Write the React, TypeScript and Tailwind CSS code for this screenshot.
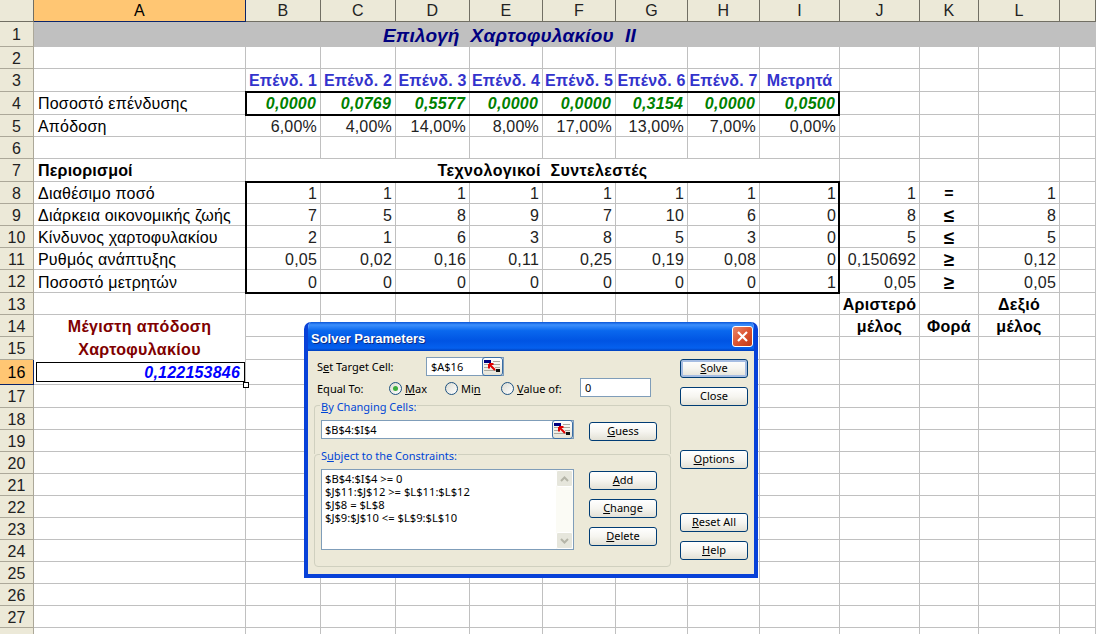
import type { ReactNode } from "react";

const COLS = ["A", "B", "C", "D", "E", "F", "G", "H", "I", "J", "K", "L", "M"];
const ROW_COUNT = 28;

const LABEL = "justify-start pl-[4px] pt-[3px] text-black";
const NUM = "justify-end pr-[3px] pt-[3px] text-[#222]";
const HEAD = "justify-center pt-[2px] font-bold text-[#3333cc]";
const WEIGHT = "justify-end pr-[4px] pt-[2px] font-bold italic text-[#008000]";
const BOLD = "justify-center pt-[2px] font-bold tracking-[0.3px] text-black";
const SIGN = "justify-center pt-[2px] font-bold text-[19px] text-black";
const MAROON = "justify-center pt-[2px] font-bold tracking-[0.35px] text-[#800000]";

type Cell = { text: string; cls: string; skipBottom?: boolean };

const cells: Record<string, Cell> = {
  A4: { text: "Ποσοστό επένδυσης", cls: "justify-start pl-[4px] pt-[2px] text-black" },
  A5: { text: "Απόδοση", cls: LABEL },
  A7: { text: "Περιορισμοί", cls: "justify-start pl-[4px] pt-[2px] font-bold text-black" },
  A8: { text: "Διαθέσιμο ποσό", cls: LABEL },
  A9: { text: "Διάρκεια οικονομικής ζωής", cls: LABEL },
  A10: { text: "Κίνδυνος χαρτοφυλακίου", cls: LABEL },
  A11: { text: "Ρυθμός ανάπτυξης", cls: LABEL },
  A12: { text: "Ποσοστό μετρητών", cls: LABEL },
  A14: { text: "Μέγιστη απόδοση", cls: MAROON, skipBottom: true },
  A15: { text: "Χαρτοφυλακίου", cls: MAROON, skipBottom: true },
  J13: { text: "Αριστερό", cls: BOLD },
  J14: { text: "μέλος", cls: BOLD },
  K14: { text: "Φορά", cls: BOLD },
  L13: { text: "Δεξιό", cls: BOLD },
  L14: { text: "μέλος", cls: BOLD },
  K8: { text: "=", cls: BOLD },
  K9: { text: "≤", cls: SIGN },
  K10: { text: "≤", cls: SIGN },
  K11: { text: "≥", cls: SIGN },
  K12: { text: "≥", cls: SIGN },
};

function fill(row: number, values: string[], cls: string, start = 1) {
  values.forEach((text, i) => {
    cells[`${COLS[start + i]}${row}`] = { text, cls };
  });
}

fill(3, ["Επένδ. 1", "Επένδ. 2", "Επένδ. 3", "Επένδ. 4", "Επένδ. 5", "Επένδ. 6", "Επένδ. 7", "Μετρητά"], HEAD);
fill(4, ["0,0000", "0,0769", "0,5577", "0,0000", "0,0000", "0,3154", "0,0000", "0,0500"], WEIGHT);
fill(5, ["6,00%", "4,00%", "14,00%", "8,00%", "17,00%", "13,00%", "7,00%", "0,00%"], NUM);
fill(8, ["1", "1", "1", "1", "1", "1", "1", "1", "1"], NUM);
fill(9, ["7", "5", "8", "9", "7", "10", "6", "0", "8"], NUM);
fill(10, ["2", "1", "6", "3", "8", "5", "3", "0", "5"], NUM);
fill(11, ["0,05", "0,02", "0,16", "0,11", "0,25", "0,19", "0,08", "0", "0,150692"], NUM);
fill(12, ["0", "0", "0", "0", "0", "0", "0", "1", "0,05"], NUM);
cells.L8 = { text: "1", cls: NUM };
cells.L9 = { text: "8", cls: NUM };
cells.L10 = { text: "5", cls: NUM };
cells.L11 = { text: "0,12", cls: NUM };
cells.L12 = { text: "0,05", cls: NUM };

function Sheet() {
  const rows = Array.from({ length: ROW_COUNT }, (_, i) => i + 1);
  return (
    <div className="relative grid grid-cols-[34px_212px_75px_75px_74px_73px_73px_72px_72px_80px_80px_59px_81px_36px] grid-rows-[22px_25px_22px_23px_23px_22px_22px_23px_22px_22px_22px_22px_23px_22px_22px_23px_25px_23px_repeat(11,22px)] text-[16px] leading-none tracking-[0.2px] [font-family:'Liberation_Sans',Arial,sans-serif]">
      <div className="border-r border-b border-[#716f64] bg-[#ece9d8]" />
      {COLS.map((c) => (
        <div
          key={c}
          className={
            c === "A"
              ? "flex items-center justify-center border-r border-b border-[#0a246a] bg-[#ffc673] pt-[1px] text-black"
              : "flex items-center justify-center border-r border-b border-[#716f64] bg-[#ece9d8] pt-[1px] text-[#222]"
          }
        >
          {c === "M" ? "" : c}
        </div>
      ))}
      {rows.map((r) => (
        <Row key={r} r={r} />
      ))}

      {/* thick ranges and the selected cell sit on top of the grid lines */}
      <div className="pointer-events-none absolute left-[245px] top-[91px] h-[25px] w-[595px] border-2 border-black" />
      <div className="pointer-events-none absolute left-[245px] top-[181px] h-[113px] w-[595px] border-2 border-black" />
      <div className="pointer-events-none absolute left-[243px] top-[382px] h-[6px] w-[6px] border border-black bg-white" />
      <SolverDialog />
    </div>
  );
}

function Row({ r }: { r: number }) {
  return (
    <>
      <div
        className={
          r === 16
            ? "flex items-center justify-center border-r border-b border-[#0a246a] bg-[#ffc673] pt-[2px] text-black"
            : "flex items-center justify-center border-r border-b border-[#aca899] bg-[#ece9d8] pt-[2px] text-[#222]"
        }
      >
        {r === ROW_COUNT ? "" : r}
      </div>
      {r === 1 ? (
        <>
          <div className="col-span-11 flex items-center justify-center whitespace-pre bg-[#c0c0c0] pl-[6px] pt-[2px] text-[19px] font-bold italic text-[#000080]">
            Επιλογή  Χαρτοφυλακίου  ΙΙ
          </div>
          <div className="bg-[#c0c0c0]" />
          <div className="bg-[#c0c0c0]" />
        </>
      ) : r === 7 ? (
        <>
          <GridCell id="A7" />
          <div className="col-span-8 flex items-center justify-center whitespace-pre border-r border-b border-[#c0c0c0] pt-[2px] font-bold tracking-[0.4px] text-black">
            Τεχνολογικοί  Συντελεστές
          </div>
          <GridCell id="J7" />
          <GridCell id="K7" />
          <GridCell id="L7" />
          <GridCell id="M7" />
        </>
      ) : (
        COLS.map((c) => <GridCell key={c} id={`${c}${r}`} />)
      )}
    </>
  );
}

function GridCell({ id }: { id: string }) {
  if (id === "A16") {
    return (
      <div className="flex items-center justify-end border-r border-b border-[#c0c0c0] py-[2px] pl-[2px]">
        <div className="flex h-full w-full items-center justify-end border border-black pr-[4px] pt-[2px] font-bold italic text-[#0000ff]">
          0,122153846
        </div>
      </div>
    );
  }
  const cell = cells[id];
  return (
    <div
      className={`flex items-center overflow-visible whitespace-nowrap border-r border-[#c0c0c0] ${
        cell?.skipBottom ? "" : "border-b"
      } ${cell?.cls ?? ""}`}
    >
      {cell?.text}
    </div>
  );
}

function XpButton({ children, primary, className }: { children: ReactNode; primary?: boolean; className?: string }) {
  return (
    <button
      type="button"
      className={`flex h-[19px] w-[68px] shrink-0 items-center justify-center rounded-[3px] border border-[#003c74] bg-gradient-to-b from-white via-[#f6f5f0] to-[#e3e1d6] pb-[2px] text-[11px] leading-none text-black ${
        primary ? "shadow-[inset_0_0_0_2px_#a6bde2]" : ""
      } ${className ?? ""}`}
    >
      {children}
    </button>
  );
}

function Radio({ checked }: { checked?: boolean }) {
  return (
    <span className="mt-[2px] flex h-[13px] w-[13px] shrink-0 items-center justify-center rounded-full border border-[#1c5180] bg-gradient-to-br from-[#dcdcd2] to-white">
      {checked && <span className="h-[5px] w-[5px] rounded-full bg-[#3dad3d]" />}
    </span>
  );
}

function RefPicker() {
  return (
    <span className="flex h-[19px] w-[21px] shrink-0 items-center justify-center rounded-[3px] border border-[#3a6ea5] bg-gradient-to-b from-white to-[#e6e4d8]">
      <svg width="17" height="13" viewBox="0 0 17 13">
        <rect x="0" y="0" width="7" height="3" fill="#000080" />
        <path d="M0 4.5H6M9 1.5H16M9 4.5H16M0 7.5H5M0 10.5H16M11 7.5H16" stroke="#a9a9a0" strokeWidth="1" />
        <rect x="12" y="9" width="4" height="3" fill="#111" />
        <path d="M5 4L11 10M5 4V8.5M5 4H9.5" stroke="#e00000" strokeWidth="2" fill="none" />
      </svg>
    </span>
  );
}

function Chevron({ up }: { up?: boolean }) {
  return (
    <svg width="9" height="6" viewBox="0 0 9 6">
      <path d={up ? "M1 5L4.5 1.5L8 5" : "M1 1L4.5 4.5L8 1"} stroke="#b5b5a8" strokeWidth="2" fill="none" />
    </svg>
  );
}

function GroupTitle({ children }: { children: ReactNode }) {
  return (
    <span className="absolute -top-[6px] left-[5px] bg-[#ece9d8] px-[1px] text-[#0046d5]">{children}</span>
  );
}

function SolverDialog() {
  return (
    <div className="absolute left-[304px] top-[322px] flex h-[256px] w-[454px] flex-col overflow-hidden rounded-t-[7px] border-x-[4px] border-b-[4px] border-[#0841d8] text-[11px] leading-[13px] tracking-normal text-black [font-family:'Noto_Sans','Open_Sans',sans-serif]">
      <div className="-mx-[4px] flex h-[29px] shrink-0 items-center justify-between bg-[linear-gradient(180deg,#0a56d8_0%,#3c8ffc_10%,#0a68ee_30%,#0054e3_65%,#0560ee_90%,#0040bd_100%)] pl-[7px] pr-[5px]">
        <span className="pt-[3px] text-[13px] font-bold text-white [font-family:'Liberation_Sans',Arial,sans-serif] [text-shadow:1px_1px_0_#0a2a80]">
          Solver Parameters
        </span>
        <span className="flex h-[21px] w-[21px] items-center justify-center rounded-[3px] border border-white bg-gradient-to-br from-[#e8866a] via-[#dd5430] to-[#c23a15]">
          <svg width="13" height="13" viewBox="0 0 13 13">
            <path d="M2 2L11 11M11 2L2 11" stroke="white" strokeWidth="2.2" />
          </svg>
        </span>
      </div>

      <div className="flex flex-1 bg-[#ece9d8] pl-[6px]">
        <div className="flex w-[357px] flex-col pt-[6px]">
          <div className="flex h-[19px] items-center pl-[3px]">
            <span className="w-[109px]">
              S<u>e</u>t Target Cell:
            </span>
            <div className="flex h-[19px] w-[78px] items-center justify-between border border-[#7f9db9] bg-white pl-[4px]">
              <span>$A$16</span>
              <RefPicker />
            </div>
          </div>

          <div className="mt-[2px] flex h-[19px] items-center pl-[3px]">
            <span className="w-[72px] pt-[2px]">Equal To:</span>
            <Radio checked />
            <span className="ml-[3px] w-[40px] pt-[2px]">
              <u>M</u>ax
            </span>
            <Radio />
            <span className="ml-[3px] w-[40px] pt-[2px]">
              Mi<u>n</u>
            </span>
            <Radio />
            <span className="ml-[3px] w-[63px] pt-[2px]">
              <u>V</u>alue of:
            </span>
            <div className="flex h-[19px] w-[71px] items-center border border-[#7f9db9] bg-white pl-[4px]">0</div>
          </div>

          <div className="relative mt-[8px] flex h-[49px] items-start rounded-t-[4px] border-x border-t border-[#d0d0bf] pl-[6px] pt-[14px]">
            <GroupTitle>
              <u>B</u>y Changing Cells:
            </GroupTitle>
            <div className="flex h-[19px] w-[253px] items-center justify-between border border-[#7f9db9] bg-white pl-[3px]">
              <span>$B$4:$I$4</span>
              <RefPicker />
            </div>
            <XpButton className="ml-[15px] mt-[2px]">
              <span>
                <u>G</u>uess
              </span>
            </XpButton>
          </div>

          <div className="relative flex h-[113px] items-start rounded-[4px] border border-[#d0d0bf] pl-[6px] pt-[14px]">
            <GroupTitle>
              S<u>u</u>bject to the Constraints:
            </GroupTitle>
            <div className="flex h-[81px] w-[253px] border border-[#7f9db9] bg-white">
              <div className="flex-1 pl-[3px] pt-[2px] text-[11.2px]">
                <div>$B$4:$I$4 &gt;= 0</div>
                <div>$J$11:$J$12 &gt;= $L$11:$L$12</div>
                <div>$J$8 = $L$8</div>
                <div>$J$9:$J$10 &lt;= $L$9:$L$10</div>
              </div>
              <div className="flex w-[17px] flex-col justify-between bg-[#fbfbf5]">
                <span className="flex h-[17px] items-center justify-center rounded-[2px] border border-white bg-[#e6e6dc]">
                  <Chevron up />
                </span>
                <span className="flex h-[17px] items-center justify-center rounded-[2px] border border-white bg-[#e6e6dc]">
                  <Chevron />
                </span>
              </div>
            </div>
            <div className="ml-[15px] mt-[2px] flex flex-col gap-[9px]">
              <XpButton>
                <span>
                  <u>A</u>dd
                </span>
              </XpButton>
              <XpButton>
                <span>
                  <u>C</u>hange
                </span>
              </XpButton>
              <XpButton>
                <span>
                  <u>D</u>elete
                </span>
              </XpButton>
            </div>
          </div>
        </div>

        <div className="ml-[9px] flex flex-col pt-[8px]">
          <XpButton primary>
            <span>
              <u>S</u>olve
            </span>
          </XpButton>
          <XpButton className="mt-[9px]">Close</XpButton>
          <XpButton className="mt-[44px]">
            <span>
              <u>O</u>ptions
            </span>
          </XpButton>
          <XpButton className="mt-[44px]">
            <span>
              <u>R</u>eset All
            </span>
          </XpButton>
          <XpButton className="mt-[9px]">
            <span>
              <u>H</u>elp
            </span>
          </XpButton>
        </div>
      </div>
    </div>
  );
}

export default function App() {
  return (
    <div className="h-[634px] w-[1096px] overflow-hidden bg-white">
      <Sheet />
    </div>
  );
}
